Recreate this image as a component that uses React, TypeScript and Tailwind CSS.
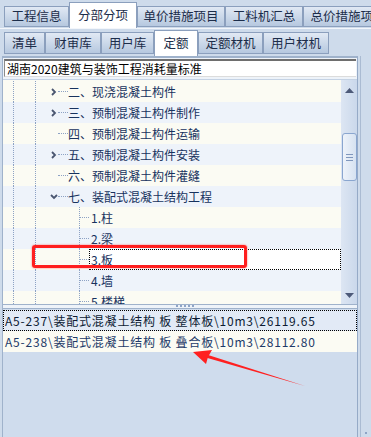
type Row = { label: string; level: 1 | 2; icon?: 'closed' | 'open'; selected?: boolean };

const topTabs = [
  { label: '工程信息', w: 'w-[65px]' },
  { label: '分部分项', w: 'w-[68px]', active: true },
  { label: '单价措施项目', w: 'w-[88px]' },
  { label: '工料机汇总', w: 'w-[78px]' },
  { label: '总价措施项目', w: 'w-[90px]' },
];

const subTabs = [
  { label: '清单', w: 'w-[41px]' },
  { label: '财审库', w: 'w-[56px]' },
  { label: '用户库', w: 'w-[53px]' },
  { label: '定额', w: 'w-[44px]', active: true },
  { label: '定额材机', w: 'w-[65px]' },
  { label: '用户材机', w: 'w-[66px]' },
];

const rows: Row[] = [
  { label: '二、现浇混凝土构件', level: 1, icon: 'closed' },
  { label: '三、预制混凝土构件制作', level: 1, icon: 'closed' },
  { label: '四、预制混凝土构件运输', level: 1 },
  { label: '五、预制混凝土构件安装', level: 1, icon: 'closed' },
  { label: '六、预制混凝土构件灌缝', level: 1 },
  { label: '七、装配式混凝土结构工程', level: 1, icon: 'open' },
  { label: '1.柱', level: 2 },
  { label: '2.梁', level: 2 },
  { label: '3.板', level: 2, selected: true },
  { label: '4.墙', level: 2 },
  { label: '5.楼梯', level: 2 },
];

function Chevron({ open }: { open?: boolean }) {
  if (open) {
    return (
      <svg width="8" height="6" viewBox="0 0 8 6">
        <path d="M1 1 L4 4 L7 1" fill="none" stroke="#4a5670" strokeWidth="1.8" />
      </svg>
    );
  }
  return (
    <svg width="6" height="8" viewBox="0 0 6 8">
      <path d="M1 1 L4 4 L1 7" fill="none" stroke="#4a5670" strokeWidth="1.8" />
    </svg>
  );
}

function TreeRow({ row, i }: { row: Row; i: number }) {
  const bg = i % 2 === 0 ? 'bg-[#fbfbf3]' : 'bg-[#eef3fa]';
  return (
    <div className={`flex h-[21px] shrink-0 ${bg}`}>
      <div className="w-[10px]" />
      <div className="w-[22px] border-l border-dotted border-[#8da2c4]" />
      <div className="w-[14px] border-l border-dotted border-[#8da2c4]" />
      {row.level === 1 ? (
        <>
          <div className="flex w-[9px] items-center justify-center">
            {row.icon && <Chevron open={row.icon === 'open'} />}
          </div>
          <div className="flex w-[10px] items-center">
            <div className="w-full border-t border-dotted border-[#8da2c4]" />
          </div>
          <div className="flex items-center text-[12px] text-[#17325e]">{row.label}</div>
        </>
      ) : (
        <>
          <div className="w-[30px]" />
          <div className="flex w-[10px] items-center border-l border-dotted border-[#8da2c4]">
            <div className="w-full border-t border-dotted border-[#8da2c4]" />
          </div>
          <div
            className={`flex flex-1 items-center border pl-[1px] text-[12px] text-[#17325e] ${
              row.selected ? 'border-dotted border-black bg-white' : 'border-transparent'
            }`}
          >
            {row.label}
          </div>
        </>
      )}
    </div>
  );
}

function Scrollbar() {
  return (
    <div className="flex w-[16px] flex-col items-center bg-gradient-to-r from-[#dde6f3] to-[#cad8eb]">
      <div className="flex h-[20px] items-center justify-center">
        <svg width="9" height="5" viewBox="0 0 9 5">
          <path d="M0 5 L4.5 0 L9 5 Z" fill="#4d5a78" />
        </svg>
      </div>
      <div className="h-[33px]" />
      <div className="flex h-[48px] w-[15px] flex-col items-center justify-center gap-[2px] rounded-[3px] border border-[#8aa6cf] bg-gradient-to-r from-[#eef3fa] to-[#d6e2f1]">
        <div className="h-px w-[7px] bg-[#7f97bd]" />
        <div className="h-px w-[7px] bg-[#7f97bd]" />
        <div className="h-px w-[7px] bg-[#7f97bd]" />
      </div>
      <div className="flex-1" />
      <div className="flex h-[18px] items-center justify-center">
        <svg width="9" height="5" viewBox="0 0 9 5">
          <path d="M0 0 L4.5 5 L9 0 Z" fill="#4d5a78" />
        </svg>
      </div>
    </div>
  );
}

export default function App() {
  return (
    <div
      className="relative flex h-[437px] w-[371px] flex-col overflow-hidden bg-[#cedbeb]"
      style={{ fontFamily: '"Noto Sans CJK SC", "Liberation Sans", sans-serif' }}
    >
      {/* top tabs */}
      <div className="flex h-[29px] shrink-0 items-end border-b border-[#f3f6fb] pl-[4px]">
        {topTabs.map((t) =>
          t.active ? (
            <div
              key={t.label}
              className={`${t.w} flex h-[26px] shrink-0 items-center justify-center border border-b-0 border-[#8b9fbd] bg-white text-[12.5px] text-[#1c2d4a]`}
            >
              {t.label}
            </div>
          ) : (
            <div
              key={t.label}
              className={`${t.w} mb-[1px] flex h-[21px] shrink-0 items-center justify-center border border-[#8b9fbd] bg-gradient-to-b from-[#e1e9f4] to-[#b6c8df] text-[12.5px] text-[#1c2d4a]`}
            >
              {t.label}
            </div>
          )
        )}
      </div>

      {/* sub tabs */}
      <div className="flex h-[27px] shrink-0 items-end pl-[4px]">
        {subTabs.map((t) =>
          t.active ? (
            <div
              key={t.label}
              className={`${t.w} flex h-[26px] shrink-0 items-center justify-center border border-b-0 border-[#8b9fbd] bg-white text-[12.5px] text-[#1c2d4a]`}
            >
              {t.label}
            </div>
          ) : (
            <div
              key={t.label}
              className={`${t.w} mb-[2px] flex h-[22px] shrink-0 items-center justify-center border border-[#8b9fbd] bg-gradient-to-b from-[#e1e9f4] to-[#b6c8df] text-[12.5px] text-[#1c2d4a]`}
            >
              {t.label}
            </div>
          )
        )}
      </div>

      <div className="flex min-h-0 flex-1">
        {/* main frame */}
        <div className="ml-[2px] flex w-[356px] flex-col border-t-2 border-r border-l border-t-[#9fb2cb] border-r-[#95aac7] border-l-[#9fb2cb] bg-[#eef3f9]">
          {/* combobox */}
          <div className="mx-[1px] mt-[1px] flex h-[18px] items-center border-t-2 border-l border-b border-t-[#6e6e6e] border-l-[#8a8a8a] border-b-[#dcdcdc] bg-white pl-[2px] text-[12px] text-black">
            湖南2020建筑与装饰工程消耗量标准
          </div>
          <div className="h-[3px] border-b border-[#c4d2e4]" />

          {/* tree */}
          <div className="flex h-[225px] shrink-0 border-b border-[#9fb2cb]">
            <div className="flex flex-1 flex-col overflow-hidden bg-[#fbfbf3] pt-[1px]">
              {rows.map((r, i) => (
                <TreeRow key={r.label} row={r} i={i} />
              ))}
            </div>
            <Scrollbar />
          </div>

          {/* splitter */}
          <div className="flex h-[3px] items-start justify-center gap-[2px] bg-[#eef3f9] pl-[10px]">
            <div className="h-[2px] w-[2px] bg-[#8ea4c6]" />
            <div className="h-[2px] w-[2px] bg-[#8ea4c6]" />
            <div className="h-[2px] w-[2px] bg-[#8ea4c6]" />
            <div className="h-[2px] w-[2px] bg-[#8ea4c6]" />
            <div className="h-[2px] w-[2px] bg-[#8ea4c6]" />
          </div>

          {/* list */}
          <div className="flex flex-1 flex-col border-t border-[#9fb2cb] bg-[#cfdced] pt-[1px]">
            <div className="flex h-[21px] items-center border border-dotted border-black bg-[#e2eaf6] pl-[1px] text-[12px] tracking-[0.8px] whitespace-nowrap text-[#0d1b33]">
              A5-237\装配式混凝土结构 板 整体板\10m3\26119.65
            </div>
            <div className="flex h-[21px] items-center border border-transparent bg-[#fbfbf3] pl-[1px] text-[12px] tracking-[0.8px] whitespace-nowrap text-[#1d3a68]">
              A5-238\装配式混凝土结构 板 叠合板\10m3\28112.80
            </div>
          </div>
        </div>

        {/* right strip */}
        <div className="flex flex-1 flex-col items-end">
          <div className="ml-[2px] h-full w-px self-start bg-[#aabbd2]" />
        </div>
      </div>

      <div className="absolute right-[4px] bottom-[3px] h-[2px] w-[2px] bg-[#8ea4c6]" />

      {/* annotation: red box */}
      <div className="absolute top-[245px] left-[32px] h-[23px] w-[215px] rounded-[3px] border-[3px] border-[#ff1e1e] shadow-[0_0_2px_#ff6060]" />

      {/* annotation: red arrow */}
      <svg className="pointer-events-none absolute inset-0" width="371" height="437" viewBox="0 0 371 437">
        <path d="M305 386 L204 357 L205 354 Z" fill="#ff2020" />
        <path d="M193 352 L212 350 L208 357 L206 364 Z" fill="#ff2020" />
      </svg>
    </div>
  );
}
